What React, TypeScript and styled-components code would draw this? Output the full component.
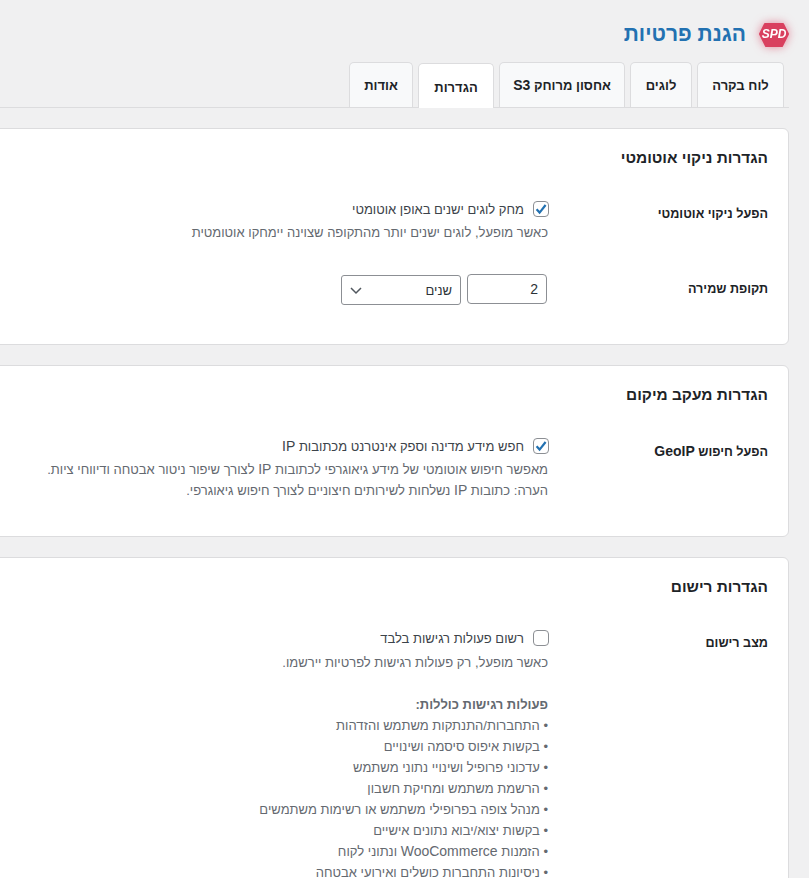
import React from "react";
import styled, { createGlobalStyle } from "styled-components";

const GlobalStyle = createGlobalStyle`
  html, body {
    margin: 0;
    padding: 0;
    height: 878px;
    overflow: hidden;
    background: #f0f0f1;
  }
  body {
    font-family: "Liberation Sans", Arial, sans-serif;
    font-size: 13px;
    color: #3c434a;
  }
`;

const Page = styled.div`
  width: 809px;
  height: 878px;
  overflow: hidden;
  direction: rtl;
  box-sizing: border-box;
  padding: 20px 20px 0 0;
`;
const Wrap = styled.div`
  width: 860px;
`;
const Header = styled.div`
  display: flex;
  align-items: center;
  gap: 12px;
  height: 28px;
  margin-bottom: 14px;
`;
const Logo = styled.svg`
  width: 32px;
  height: 30px;
  margin-right: -1px;
  flex: none;
  filter: drop-shadow(0 0 5px rgba(217, 64, 95, 0.6));
`;
const Title = styled.h1`
  margin: 0;
  font-size: 21px;
  line-height: 28px;
  font-weight: 700;
  color: #2271b1;
`;
const Tabs = styled.nav`
  display: flex;
  align-items: flex-end;
  gap: 5px;
  height: 45px;
  padding-right: 5px;
  border-bottom: 1px solid #dcdcde;
  margin-bottom: 20px;
`;
const Tab = styled.a<{ $active?: boolean; $w: number }>`
  box-sizing: border-box;
  width: ${(p) => p.$w}px;
  height: 45px;
  display: flex;
  align-items: center;
  justify-content: center;
  border: 1px solid #dcdcde;
  border-bottom: none;
  border-radius: 5px 5px 0 0;
  background: ${(p) => (p.$active ? "#fff" : "#f8f9fa")};
  color: #1d2327;
  font-size: 13px;
  font-weight: 700;
  margin-bottom: ${(p) => (p.$active ? "-1px" : "0")};
  padding-top: ${(p) => (p.$active ? "3px" : "0")};
`;
const Card = styled.section<{ $tall?: boolean }>`
  box-sizing: border-box;
  background: #fff;
  border: 1px solid #dcdcde;
  border-radius: 6px;
  padding: 20px 20px 0;
  margin-bottom: 20px;
  min-height: ${(p) => (p.$tall ? "400px" : "0")};
`;
const CardTitle = styled.h2`
  margin: 0 0 33px;
  font-size: 15.4px;
  line-height: 18px;
  font-weight: 700;
  color: #1d2327;
`;
const Row = styled.div<{ $pb?: number }>`
  display: flex;
  padding-bottom: ${(p) => p.$pb ?? 0}px;
`;
const Label = styled.div<{ $pt?: number }>`
  width: 220px;
  flex: none;
  padding-top: ${(p) => p.$pt ?? 0}px;
  font-size: 12.6px;
  line-height: 18px;
  font-weight: 700;
  color: #1d2327;
`;
const Field = styled.div`
  flex: 1;
`;
const CheckLine = styled.label`
  display: flex;
  align-items: center;
  gap: 9px;
  height: 18px;
  font-size: 13px;
  color: #3c434a;
`;
const Box = styled.span`
  box-sizing: border-box;
  width: 16px;
  height: 16px;
  margin-right: -1px;
  flex: none;
  border: 1px solid #8c8f94;
  border-radius: 4px;
  background: #fff;
  display: flex;
  align-items: center;
  justify-content: center;
`;
const Hint = styled.p<{ $mt?: number }>`
  margin: ${(p) => p.$mt ?? 4}px 0 0;
  font-size: 13px;
  line-height: 21px;
  color: #646970;
`;
const Latin = styled.span`
  font-size: 14px;
`;
const List = styled.div`
  margin-top: 21px;
  font-size: 13px;
  line-height: 21px;
  color: #646970;
`;
const ListTitle = styled.div`
  font-weight: 700;
`;
const Inline = styled.div`
  display: flex;
  gap: 6px;
  margin-right: 1px;
`;
const NumberBox = styled.div`
  box-sizing: border-box;
  width: 80px;
  height: 30px;
  border: 1px solid #8c8f94;
  border-radius: 4px;
  background: #fff;
  display: flex;
  align-items: center;
  padding: 0 8px;
  font-size: 14px;
  color: #2c3338;
`;
const SelectBox = styled.div`
  box-sizing: border-box;
  width: 120px;
  height: 30px;
  margin-top: 1px;
  border: 1px solid #8c8f94;
  border-radius: 3px;
  background: #fff;
  display: flex;
  align-items: center;
  justify-content: space-between;
  padding: 0 8px 0 7px;
  font-size: 13px;
  color: #2c3338;
`;

const Check = () => (
  <Box>
    <svg width="14" height="14" viewBox="0 0 14 14">
      <path d="M2.6 7.2 L5.6 10.6 L11.6 3" fill="none" stroke="#2271b1" strokeWidth="2.2" />
    </svg>
  </Box>
);

const items: React.ReactNode[] = [
  "התחברות/התנתקות משתמש והזדהות",
  "בקשות איפוס סיסמה ושינויים",
  "עדכוני פרופיל ושינויי נתוני משתמש",
  "הרשמת משתמש ומחיקת חשבון",
  "מנהל צופה בפרופילי משתמש או רשימות משתמשים",
  "בקשות יצוא/יבוא נתונים אישיים",
  <>הזמנות <Latin>WooCommerce</Latin> ונתוני לקוח</>,
  "ניסיונות התחברות כושלים ואירועי אבטחה",
];

export default function App() {
  return (
    <Page>
      <GlobalStyle />
      <Wrap>
        <Header>
          <Logo viewBox="0 0 32 30">
            <path d="M7 5 L25 5 L30 15 L24 27 L8 27 L2 15 Z" fill="#d9405f" stroke="#d9405f" strokeWidth="2" strokeLinejoin="round" />
            <text x="16" y="19" textAnchor="middle" fontFamily="Liberation Sans" fontSize="12" fontWeight="700" fontStyle="italic" fill="#fff" direction="ltr">SPD</text>
          </Logo>
          <Title>הגנת פרטיות</Title>
        </Header>
        <Tabs>
          <Tab $w={87}>לוח בקרה</Tab>
          <Tab $w={62}>לוגים</Tab>
          <Tab $w={126}><span>אחסון מרוחק <Latin>S3</Latin></span></Tab>
          <Tab $w={76} $active>הגדרות</Tab>
          <Tab $w={64}>אודות</Tab>
        </Tabs>

        <Card>
          <CardTitle>הגדרות ניקוי אוטומטי</CardTitle>
          <Row $pb={31}>
            <Label $pt={5}>הפעל ניקוי אוטומטי</Label>
            <Field>
              <CheckLine><Check />מחק לוגים ישנים באופן אוטומטי</CheckLine>
              <Hint>כאשר מופעל, לוגים ישנים יותר מהתקופה שצוינה יימחקו אוטומטית</Hint>
            </Field>
          </Row>
          <Row $pb={39}>
            <Label $pt={6}>תקופת שמירה</Label>
            <Field>
              <Inline>
                <NumberBox>2</NumberBox>
                <SelectBox>
                  שנים
                  <svg width="14" height="14" viewBox="0 0 14 14">
                    <path d="M2 5 L7 10 L12 5" fill="none" stroke="#50575e" strokeWidth="1.5" />
                  </svg>
                </SelectBox>
              </Inline>
            </Field>
          </Row>
        </Card>

        <Card>
          <CardTitle>הגדרות מעקב מיקום</CardTitle>
          <Row $pb={35}>
            <Label $pt={5}>הפעל חיפוש <Latin>GeoIP</Latin></Label>
            <Field>
              <CheckLine><Check /><span>חפש מידע מדינה וספק אינטרנט מכתובות <Latin>IP</Latin></span></CheckLine>
              <Hint>
                מאפשר חיפוש אוטומטי של מידע גיאוגרפי לכתובות <Latin>IP</Latin> לצורך שיפור ניטור אבטחה ודיווחי ציות.
                <br />
                הערה: כתובות <Latin>IP</Latin> נשלחות לשירותים חיצוניים לצורך חיפוש גיאוגרפי.
              </Hint>
            </Field>
          </Row>
        </Card>

        <Card $tall>
          <CardTitle>הגדרות רישום</CardTitle>
          <Row>
            <Label $pt={5}>מצב רישום</Label>
            <Field>
              <CheckLine><Box />רשום פעולות רגישות בלבד</CheckLine>
              <Hint $mt={5}>כאשר מופעל, רק פעולות רגישות לפרטיות יירשמו.</Hint>
              <List>
                <ListTitle>פעולות רגישות כוללות:</ListTitle>
                {items.map((t, i) => (
                  <div key={i}>• {t}</div>
                ))}
              </List>
            </Field>
          </Row>
        </Card>
      </Wrap>
    </Page>
  );
}
